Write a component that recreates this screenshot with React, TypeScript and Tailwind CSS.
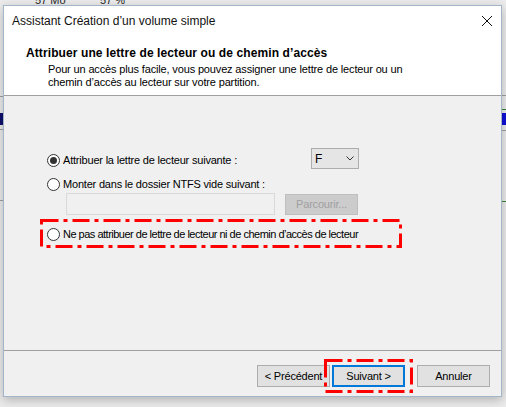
import React from "react";

function Radio({ checked }: { checked?: boolean }) {
  return (
    <span className="flex h-[13px] w-[13px] shrink-0 items-center justify-center rounded-full border border-[#333333] bg-white">
      {checked && <span className="h-[7px] w-[7px] rounded-full bg-[#333333]" />}
    </span>
  );
}

function DashBox({ w, h, className }: { w: number; h: number; className: string }) {
  return (
    <svg width={w} height={h} className={className}>
      <rect
        x={1.5}
        y={1.5}
        width={w - 3}
        height={h - 3}
        fill="none"
        stroke="#ff0000"
        strokeWidth={3}
        strokeDasharray="17 5 4 5"
      />
    </svg>
  );
}

export default function App() {
  return (
    <div
      className="relative h-[407px] w-[506px] overflow-hidden bg-[#ececec] text-[11px] text-black"
      style={{ fontFamily: '"Liberation Sans", Arial, sans-serif' }}
    >
      {/* window behind */}
      <div className="absolute left-[35px] top-[-6px] text-[11px] leading-[13px] text-[#222]">57 Mo</div>
      <div className="absolute left-[100px] top-[-6px] text-[11px] leading-[13px] text-[#222]">57 %</div>
      <div className="absolute left-0 top-[96px] h-px w-[3px] bg-[#a0a0a0]" />
      <div className="absolute left-0 top-[113px] h-[12px] w-[3px] bg-[#10106e]" />
      <div className="absolute left-0 top-[129px] h-px w-[3px] bg-[#a0a0a0]" />
      <div className="absolute left-0 top-[200px] h-px w-[3px] bg-[#a0a0a0]" />
      <div className="absolute right-0 top-[95px] h-px w-[4px] bg-[#a0a0a0]" />
      <div className="absolute right-0 top-[109px] h-px w-[4px] bg-[#3a8a3a]" />
      <div className="absolute right-0 top-[113px] h-[12px] w-[4px] bg-[#1010d8]" />
      <div className="absolute right-0 top-[130px] h-px w-[4px] bg-[#a0a0a0]" />
      <div className="absolute right-0 top-[201px] h-px w-[4px] bg-[#3a8a3a]" />

      {/* dialog */}
      <div className="absolute left-[3px] top-[5px] flex h-[392px] w-[499px] flex-col border border-[#a3b5c9] bg-[#f0f0f0] shadow-[0_3px_10px_rgba(0,0,0,0.25)]">
        <div className="flex h-[30px] items-center justify-between bg-white pl-[8px] pr-[9px] text-[12px] text-[#111]">
          <span>Assistant Création d’un volume simple</span>
          <svg width="10" height="10" viewBox="0 0 10 10">
            <path d="M0 0 L10 10 M10 0 L0 10" stroke="#111" strokeWidth="1" />
          </svg>
        </div>

        <div className="border-b border-[#a0a0a0] bg-white pb-[6px] pt-[11px] leading-[13px]">
          <div className="pl-[22px] text-[12px] font-bold tracking-[0.1px]">
            Attribuer une lettre de lecteur ou de chemin d’accès
          </div>
          <div className="mt-[3px] pl-[44px] tracking-[-0.15px]">
            Pour un accès plus facile, vous pouvez assigner une lettre de lecteur ou un
            <br />
            chemin d’accès au lecteur sur votre partition.
          </div>
        </div>

        <div className="flex flex-1 flex-col pl-[43px] tracking-[-0.2px]">
          <div className="mt-[52px] flex h-[21px] items-center">
            <div className="flex w-[264px] items-center gap-[3px] pt-[3px]">
              <Radio checked />
              <span>Attribuer la lettre de lecteur suivante :</span>
            </div>
            <div className="flex h-[21px] w-[48px] items-center justify-between border border-[#adadad] bg-[#e5e5e5] pl-[3px] pr-[4px] text-[12px]">
              <span>F</span>
              <svg width="8" height="5" viewBox="0 0 8 5">
                <path d="M0.5 0.5 L4 4 L7.5 0.5" fill="none" stroke="#333" strokeWidth="1" />
              </svg>
            </div>
          </div>

          <div className="mt-[8px] flex h-[15px] items-center gap-[3px]">
            <Radio />
            <span>Monter dans le dossier NTFS vide suivant :</span>
          </div>

          <div className="mt-[1px] flex items-start">
            <div className="ml-[19px] h-[22px] w-[209px] border border-[#d9d9d9] bg-[#f0f0f0]" />
            <div className="ml-[10px] mt-[1px] flex h-[21px] w-[73px] items-center justify-center border border-[#bfbfbf] bg-[#cccccc] text-[#a0a0a0]">
              Parcourir...
            </div>
          </div>

          <div className="mt-[12px] flex h-[15px] items-center gap-[3px]">
            <Radio />
            <span className="tracking-[-0.5px]">
              Ne pas attribuer de lettre de lecteur ni de chemin d’accès de lecteur
            </span>
          </div>
        </div>

        <div className="flex h-[46px] justify-end border-t border-[#a0a0a0] pr-[11px] pt-[14px] tracking-[-0.2px]">
          <div className="flex h-[22px] w-[73px] items-center justify-center border border-[#adadad] bg-[#e1e1e1]">
            &lt; Précédent
          </div>
          <div className="ml-[2px] flex h-[22px] w-[73px] items-center justify-center border-2 border-[#0078d7] bg-[#e1e1e1]">
            Suivant &gt;
          </div>
          <div className="ml-[12px] flex h-[22px] w-[73px] items-center justify-center border border-[#adadad] bg-[#e1e1e1]">
            Annuler
          </div>
        </div>
      </div>

      {/* annotations */}
      <DashBox w={362} h={29} className="absolute left-[40px] top-[219px]" />
      <DashBox w={89} h={34} className="absolute left-[324px] top-[359px]" />
    </div>
  );
}
